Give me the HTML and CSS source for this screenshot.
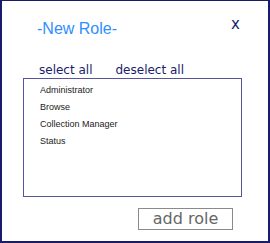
FILE: index.html
```html
<!DOCTYPE html>
<html lang="en">
  <head>
    <meta charset="UTF-8" />
    <title>New Role</title>
    <link rel="stylesheet" href="styles.css">
  </head>
  <body>
    <div class="dialog">
      <div class="header">
        <h1>-New Role-</h1>
        <span class="close">x</span>
      </div>

      <div class="select-links">
        <a href="#">select all</a>
        <a href="#">deselect all</a>
      </div>

      <ul class="role-list">
        <li>Administrator</li>
        <li>Browse</li>
        <li>Collection Manager</li>
        <li>Status</li>
      </ul>

      <div class="actions">
        <button type="button">add role</button>
      </div>
    </div>
  </body>
</html>
```

FILE: styles.css
```css
body {
  margin: 0;
  font-family: "DejaVu Sans", sans-serif;
  background-color: #fff;
}
.dialog {
  box-sizing: border-box;
  width: 270px;
  height: 243px;
  border: 2px solid #1b1b6b;
  border-top-width: 1px;
  padding: 0 26px 0 21px;
}
.header {
  display: flex;
  justify-content: space-between;
  align-items: flex-start;
  padding: 14px 2px 0 14px;
}
h1 {
  margin: 5px 0 0 0;
  font-family: "Liberation Sans", Arial, sans-serif;
  font-weight: normal;
  font-size: 16px;
  line-height: 18px;
  color: #2f8eff;
}
.close {
  font-size: 15px;
  line-height: 18px;
  color: #1b1b6b;
  cursor: pointer;
}
.select-links {
  display: flex;
  gap: 23px;
  margin-top: 25px;
  padding-left: 16px;
  font-size: 12px;
  line-height: 14px;
}
.select-links a {
  color: #1b1b6b;
  text-decoration: none;
}
.role-list {
  box-sizing: border-box;
  height: 119px;
  margin: 1px 0 0 0;
  padding: 3px 0 0 16px;
  list-style: none;
  border: 1px solid #55559c;
  font-family: "Liberation Sans", Arial, sans-serif;
  font-size: 9px;
  line-height: 17px;
  color: #222;
}
.actions {
  display: flex;
  justify-content: flex-end;
  margin-top: 11px;
  padding-right: 9px;
}
button {
  width: 95px;
  height: 22px;
  padding: 0;
  border: 1px solid #8a8a8a;
  background-color: #fff;
  font-family: "DejaVu Sans", sans-serif;
  font-size: 16px;
  line-height: 20px;
  color: #666;
  cursor: pointer;
}
```
